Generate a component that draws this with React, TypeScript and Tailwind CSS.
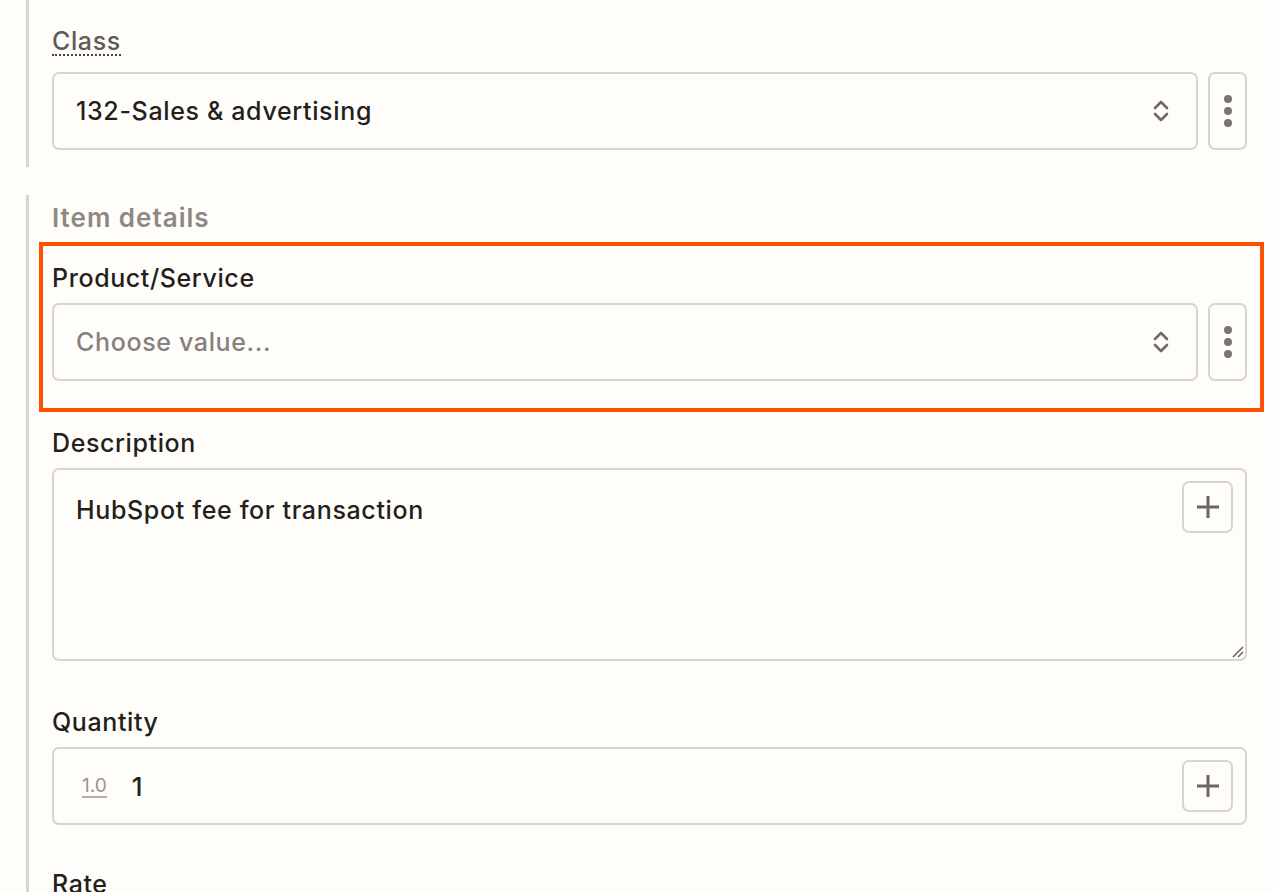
import React from "react";

const font = { fontFamily: "Inter, 'Noto Sans', sans-serif" };

function ChevronUpDown() {
  return (
    <svg width="20" height="26" viewBox="0 0 20 26" fill="none">
      <path d="M4 10 L10 4 L16 10" stroke="#6f6a66" strokeWidth="2.6" strokeLinecap="round" strokeLinejoin="round" />
      <path d="M4 16 L10 22 L16 16" stroke="#6f6a66" strokeWidth="2.6" strokeLinecap="round" strokeLinejoin="round" />
    </svg>
  );
}

function Dots() {
  return (
    <div className="flex flex-col items-center gap-[4px]">
      <span className="block w-[8px] h-[8px] rounded-full bg-[#7a7571]" />
      <span className="block w-[8px] h-[8px] rounded-full bg-[#7a7571]" />
      <span className="block w-[8px] h-[8px] rounded-full bg-[#7a7571]" />
    </div>
  );
}

function Plus() {
  return (
    <div className="w-[51px] h-[52px] rounded-[7px] border-2 border-[#d8d5cd] bg-[#fffdf9] flex items-center justify-center">
      <svg width="28" height="28" viewBox="0 0 28 28">
        <path d="M14 3 V25 M3 14 H25" stroke="#6b6661" strokeWidth="3" />
      </svg>
    </div>
  );
}

function SelectRow({ value, placeholder }: { value?: string; placeholder?: string }) {
  return (
    <div className="flex gap-[10px]">
      <div className="flex-1 h-[78px] rounded-[7px] border-2 border-[#d8d5cd] bg-[#fffdf9] flex items-center pl-[22px] pr-[25px]">
        <span
          className={
            "flex-1 text-[25px] tracking-[0.65px] font-medium pt-[2px] " +
            (value ? "text-[#241f1c]" : "text-[#86817c]")
          }
        >
          {value ?? placeholder}
        </span>
        <ChevronUpDown />
      </div>
      <div className="w-[39px] h-[78px] rounded-[7px] border-2 border-[#d8d5cd] flex items-center justify-center">
        <Dots />
      </div>
    </div>
  );
}

function Label({ children }: { children: React.ReactNode }) {
  return (
    <div className="h-[32px] flex items-center text-[25px] tracking-[0.6px] font-medium text-[#241f1c] mb-[8px]">
      {children}
    </div>
  );
}

export default function App() {
  return (
    <div className="h-[892px] overflow-hidden bg-[#fffdf9] pl-[26px] pr-[26px]" style={font}>
      {/* Section 1 */}
      <div className="border-l-[3px] border-[#d8d5cd] pl-[23px] pt-[26px] pb-[17px]">
        <div className="h-[32px] flex items-center mb-[14px]">
          <span className="text-[25px] tracking-[0.6px] font-medium text-[#5f5a56] leading-[26px] border-b-2 border-dotted border-[#4a4542]">
            Class
          </span>
        </div>
        <SelectRow value="132-Sales & advertising" />
      </div>

      {/* Section 2 */}
      <div className="mt-[28px] border-l-[3px] border-[#d8d5cd] pl-[23px] pt-[6px] pb-[40px]">
        <div className="h-[32px] flex items-center text-[26px] tracking-[1px] font-semibold text-[#8d8883] mb-[9px]">
          Item details
        </div>

        <div className="-ml-[13px] -mr-[17px] border-4 border-[#ff4f00] pl-[9px] pr-[13px] pt-[17px] pb-[27px]">
          <Label>Product/Service</Label>
          <SelectRow placeholder="Choose value..." />
        </div>

        <div className="mt-[16px]">
          <Label>Description</Label>
          <div className="relative h-[193px] rounded-[7px] border-2 border-[#d8d5cd] bg-[#fffdf9] pl-[22px] pt-[22px]">
            <span className="text-[25px] tracking-[0.65px] font-medium text-[#241f1c]">HubSpot fee for transaction</span>
            <div className="absolute right-[12px] top-[11px]">
              <Plus />
            </div>
            <svg className="absolute right-[1px] bottom-[1px]" width="14" height="14" viewBox="0 0 14 14">
              <path d="M13 3 L3 13 M13 8 L8 13" stroke="#6b6661" strokeWidth="1.6" />
            </svg>
          </div>
        </div>

        <div className="mt-[46px]">
          <Label>Quantity</Label>
          <div className="h-[78px] rounded-[7px] border-2 border-[#d8d5cd] bg-[#fffdf9] flex items-center pl-[28px] pr-[12px]">
            <span className="text-[19px] font-normal text-[#9a958f] border-b-2 border-[#b5b0aa] leading-[21px]">
              1.0
            </span>
            <span className="ml-[25px] flex-1 text-[26px] font-medium text-[#241f1c]">1</span>
            <Plus />
          </div>
        </div>

        <div className="mt-[44px]">
          <Label>Rate</Label>
        </div>
      </div>
    </div>
  );
}
